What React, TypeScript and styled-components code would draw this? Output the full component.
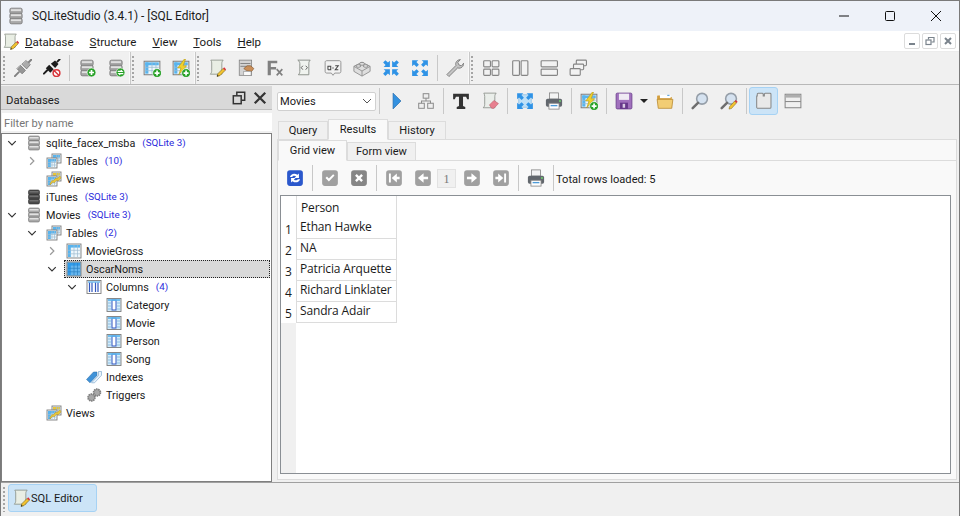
import React from 'react';
import styled, { createGlobalStyle } from 'styled-components';

const GlobalStyle = createGlobalStyle`
  html, body { margin: 0; padding: 0; background: #fff; }
  body { font-family: Roboto, 'Open Sans', 'Liberation Sans', sans-serif; font-size: 11.1px; color: #1a1a1a; }
`;

/* ---------- icons ---------- */

const Db = ({ dark }: { dark?: boolean }) => {
  const a = dark ? '#4a4a4a' : '#a9a9a9';
  const b = dark ? '#2c2c2c' : '#6f6f6f';
  return (
    <g>
      {[1, 5.5, 10].map((y) => (
        <g key={y}>
          <rect x='2.500' y={y} width='11' height='5' rx='1.500' fill={a} stroke={b} strokeWidth='.6' />
          <rect x='3.500' y={y + 1} width='9' height='1.500' fill={dark ? '#707070' : '#e2e2e2'} />
        </g>
      ))}
    </g>
  );
};

const Plus = ({ x = 12, y = 12, color = '#27a127' }: { x?: number; y?: number; color?: string }) => (
  <g>
    <circle cx={x} cy={y} r='3.900' fill={color} stroke='#fff' strokeWidth='.5' />
    <path d={`M${x - 2.2} ${y}h4.400M${x} ${y - 2.2}v4.400`} stroke='#fff' strokeWidth='1.500' />
  </g>
);

const Grid = ({ x = 1, y = 2, w = 14, h = 12, head = '#58b4ee', line = '#9dbcd1', frame = '#7d7d7d', body = '#eef7fc' }: { x?: number; y?: number; w?: number; h?: number; head?: string; line?: string; frame?: string; body?: string }) => (
  <g>
    <rect x={x} y={y} width={w} height={h} fill={body} stroke={frame} strokeWidth='.9' />
    <rect x={x + 1} y={y + 1} width={w - 2} height='2.600' fill={head} />
    <rect x={x + 1} y={y + 1} width='2.800' height={h - 2} fill={head} />
    {[0.45, 0.7].map((f) => <path key={f} d={`M${x + 1} ${y + h * f}h${w - 2}`} stroke={line} strokeWidth='.7' />)}
    {[0.5, 0.75].map((f) => <path key={f} d={`M${x + w * f} ${y + 1}v${h - 2}`} stroke={line} strokeWidth='.7' />)}
  </g>
);

const Paper = () => (
  <path d='M2.500 1h11c-1 1-1.200 2-1.200 3v9.500H2c1-1 1.300-2 1.300-3V3.500C3.300 2.500 3 1.700 2.500 1z' fill='#e9eee4' stroke='#858c82' strokeWidth='.7' />
);

const Pencil = () => (
  <g>
    <path d='M8 15.500l.8-2.500 4.600-4.600 1.800 1.800-4.600 4.600z' fill='#f2c230' stroke='#6b5a14' strokeWidth='.5' />
    <path d='M13.400 8.400l1-1 1.700 1.700-.9 1.100z' fill='#d8343a' />
    <path d='M8 15.500l.4-1.500 1.100 1.100z' fill='#222' />
  </g>
);

const Arrows = ({ color = '#2f93e6', out }: { color?: string; out?: boolean }) => (
  <g fill={color}>
    {(out
      ? ['M1 1h5.500L4.800 2.700 7 5 5 7 2.700 4.800 1 6.500z', 'M15 1v5.500l-1.700-1.700L11 7 9 5l2.200-2.300L9.500 1z', 'M1 15V9.500l1.700 1.700L5 9l2 2-2.200 2.300L6.500 15z', 'M15 15H9.500l1.700-1.700L9 11l2-2 2.300 2.200L15 9.500z']
      : ['M7 7H1.500l1.700-1.700L1 3l2-2 2.300 2.200L7 1.500z', 'M9 7V1.500l1.700 1.700L13 1l2 2-2.200 2.300L14.500 7z', 'M7 9v5.500l-1.700-1.700L3 15l-2-2 2.200-2.300L1.500 9z', 'M9 9h5.500l-1.700 1.700L15 13l-2 2-2.300-2.200L9 14.500z']
    ).map((d) => <path key={d} d={d} />)}
  </g>
);

const Wins = ({ rects }: { rects: number[][] }) => (
  <g>
    {rects.map(([x, y, w, h]) => (
      <rect key={`${x}-${y}`} x={x} y={y} width={w} height={h} rx='.8' fill='#f2f2f2' stroke='#858585' strokeWidth='1' />
    ))}
  </g>
);

const Bolt = () => <path d='M11 0L5 8h3l-2 6 7-8h-3l2-6z' fill='#f1d02c' stroke='#b09510' strokeWidth='.5' />;

const Printer = () => (
  <g>
    <rect x='4' y='.8' width='8' height='5.500' fill='#f4f4f4' stroke='#808080' strokeWidth='.7' />
    <rect x='.8' y='6' width='14.400' height='7' rx='1.500' fill='#62676d' />
    <rect x='3.500' y='10' width='9' height='5.200' fill='#fff' stroke='#808080' strokeWidth='.7' />
    <rect x='5' y='11.500' width='6' height='1.200' fill='#4d9bd8' />
    <circle cx='13.300' cy='8' r='.8' fill='#6fdc6f' />
  </g>
);

const Lens = () => (
  <g>
    <circle cx='9.800' cy='6' r='4.800' fill='#d5e2f0' stroke='#959ea8' strokeWidth='1.400' />
    <path d='M6.200 9.600L1.500 14.300' stroke='#6e6e6e' strokeWidth='2.200' strokeLinecap='round' />
  </g>
);

const Round = ({ color, children }: { color: string; children: React.ReactNode }) => (
  <g>
    <rect x='1' y='1' width='14' height='14' rx='2.500' fill={color} />
    {children}
  </g>
);

const drawings: Record<string, React.ReactNode> = {
  page: <g><Paper /><Pencil /></g>,
  plug: <g strokeLinecap='round'><path d='M.8 15.200l3.500-3.500' stroke='#808080' strokeWidth='1.700' /><path d='M2.800 8.800l4.400 4.400 3-3L5.800 5.800z' fill='#969696' stroke='#6c6c6c' strokeWidth='.6' /><path d='M7.200 4.800l4 4 3.300-3.800-3.500-3.500z' fill='#ababab' stroke='#6c6c6c' strokeWidth='.6' /><path d='M13.300 2.700l2-2' stroke='#808080' strokeWidth='1.700' /></g>,
  unplug: <g strokeLinecap='round'><path d='M.8 13l3-3' stroke='#1c1c1c' strokeWidth='1.700' /><path d='M2.500 8.200l4 4 3-3-4-4z' fill='#1c1c1c' /><path d='M7 4.200l3.800 3.800 3-3.600L10.700 1.300z' fill='#1c1c1c' /><path d='M12.800 2.300l2-2' stroke='#1c1c1c' strokeWidth='1.700' /><circle cx='12' cy='12.500' r='3' fill='#fff' stroke='#d8343a' strokeWidth='1.300' /><path d='M10 10.500l4 4' stroke='#d8343a' strokeWidth='1.300' /></g>,
  db: <Db />,
  dbDark: <Db dark />,
  dbAdd: <g><Db /><Plus /></g>,
  dbRefresh: <g><Db /><circle cx='12' cy='12' r='3.900' fill='#27a127' stroke='#fff' strokeWidth='.5' /><path d='M9.500 11h4l-1.200-1.200M14.500 13h-4l1.200 1.200' fill='none' stroke='#fff' strokeWidth='1' /></g>,
  tableAdd: <g><Grid /><Plus x={12.500} y={12.500} /></g>,
  tableBolt: <g><Grid /><Bolt /><Plus x={12.500} y={12.500} /></g>,
  hand: <g><rect x='2' y='1' width='11' height='13.500' fill='#d4d4d4' stroke='#808080' strokeWidth='.7' /><path d='M3 4h9M3 6.500h9' stroke='#7c7c7c' strokeWidth='.8' /><path d='M6 8.500l3-2.500h3l3 2.500-2 2.500-3-.4-2-.6z' fill='#c98f5a' stroke='#7c4c20' strokeWidth='.5' /><rect x='6' y='11' width='6.500' height='3.500' fill='#fafafa' stroke='#888' strokeWidth='.5' /></g>,
  fx: <g><path d='M1.500 1.500h8.500v2.300H4.300v3.200H9v2.300H4.300v5.200H1.500z' fill='#808080' /><path d='M9.500 9l5 5.500M14.500 9l-5 5.500' stroke='#808080' strokeWidth='1.500' /></g>,
  script: <g><path d='M2.500 1h11c-1 1-1.200 2-1.200 3v10H3c1-1 1.300-2 1.300-3V4c0-1-.6-2.200-1.800-3z' fill='#f0f3ef' stroke='#858a83' strokeWidth='.8' /><path d='M7 6L5.500 7.700 7 9.500M9.500 6L11 7.700 9.500 9.500' fill='none' stroke='#555' strokeWidth='.8' /></g>,
  az: <g><path d='M1 3c0-1 .5-1.500 1.500-1.500h11c1 0 1.500.5 1.500 1.500v8c0 1-.5 1.500-1.500 1.500H9.500L8 14.500l-1.500-2h-4c-1 0-1.500-.5-1.500-1.500z' fill='#f2f2f2' stroke='#8c8c8c' strokeWidth='.8' /><path d='M3.500 9.500V6.500h2.500v3H3.500M7.400 8h1.200M10 6h2.700L10 9.500h2.700' fill='none' stroke='#444' strokeWidth='.9' /></g>,
  lego: <g fill='#dedede' stroke='#8f8f8f' strokeWidth='.8'><path d='M.8 6.500L8 2.800l7.200 3.700V11L8 15.200.8 11z' /><path d='M.8 6.500l7.200 4.200 7.200-4.200M8 10.700v4.500' fill='none' /><ellipse cx='8' cy='4.300' rx='2.300' ry='1.300' /><ellipse cx='4.800' cy='6.200' rx='2.100' ry='1.200' /><ellipse cx='11.200' cy='6.200' rx='2.100' ry='1.200' /></g>,
  collapse: <Arrows />,
  expand: <Arrows out />,
  wrench: <path d='M.8 13.800L8.800 5.800C8 3.500 9.500 .8 12.800.5L10.500 3l1 2.300 2.300.8L15.800 3.600c0 3.400-2.700 5.200-5.400 4.300L2.600 15.600z' fill='#c4c4c4' stroke='#7c7c7c' strokeWidth='.8' />,
  winGrid: <Wins rects={[[1.500, 1.500, 6, 5.500], [9, 1.500, 6, 5.500], [1.500, 9, 6, 5.500], [9, 9, 6, 5.500]]} />,
  winCols: <Wins rects={[[1.500, 1.500, 6, 13], [9, 1.500, 6, 13]]} />,
  winRows: <Wins rects={[[1, 1.500, 14.500, 5.500], [1, 9, 14.500, 5.500]]} />,
  winCascade: <Wins rects={[[6.500, 1, 9, 5], [4, 4.500, 9, 5], [1, 8.500, 9, 6]]} />,
  play: <path d='M4.500 1l7 7-7 7z' fill='#3391e0' stroke='#2368a8' strokeWidth='.6' />,
  schema: <g fill='#eeeeee' stroke='#8c8c8c' strokeWidth='.9'><rect x='5.500' y='1.500' width='5' height='4' /><rect x='1.500' y='10' width='5' height='4.500' /><rect x='9.500' y='10' width='5' height='4.500' /><path d='M8 5.500V8M4 10V8h8v2' fill='none' /></g>,
  bigT: <path d='M1 1.500h14v5h-1.500L12.500 4.300H9.800v8.200l2 .9v1.600H4.200v-1.600l2-.9V4.300H3.500L2.500 6.500H1z' fill='#333' />,
  eraser: <g><path d='M2.500 1h11c-1 1-1.200 2-1.200 3v10H2c1-1 1.300-2 1.300-3V4c0-1-.3-2.200-.8-3z' fill='#eaeeea' stroke='#858a83' strokeWidth='.7' /><path d='M7.500 11.500l4-4 4 2.800-4 4.200h-2z' fill='#e77f8f' stroke='#b85a66' strokeWidth='.5' /></g>,
  expandDense: <g><rect x='2.500' y='2.500' width='11' height='11' fill='#bfe0f7' stroke='#7fb8e2' strokeWidth='.6' /><Arrows out /></g>,
  printer: <Printer />,
  save: <g><rect x='1' y='1' width='14' height='14' rx='1' fill='#a070bd' stroke='#6f4390' strokeWidth='.8' /><rect x='3.500' y='1.500' width='9' height='5.500' fill='#efeaf3' /><rect x='4.500' y='9.500' width='7' height='5.500' fill='#66378a' /><rect x='6.800' y='10.500' width='2.200' height='3.500' fill='#d9cbe4' /></g>,
  folder: <g><path d='M1 4c0-.7.3-1 1-1h4l1.500 1.500H14v3H1z' fill='#d39e3d' /><path d='M3.500 2.500H13v3H3.500z' fill='#fff' /><path d='M10 2.500h2v1h-2z' fill='#5da5dc' /><path d='M1 6.500h14l-1 8H2z' fill='#f2cd74' stroke='#b8892f' strokeWidth='.7' /></g>,
  search: <Lens />,
  searchPen: <g><Lens /><path d='M8 15.200l.5-2.200 4.500-5 1.700 1.700-4.500 5z' fill='#f2c230' stroke='#6b5a14' strokeWidth='.4' /><path d='M13 8l1-1 1.700 1.700-1 1z' fill='#d8343a' /></g>,
  layoutTabs: <path d='M1.500 3.500h.5V2c0-.5.3-.8.8-.8h3.700c.5 0 .8.300.8.800v1.500h1V2c0-.5.3-.8.800-.8h4.300c.5 0 .8.300.8.800v11.500c0 .5-.5 1-1 1H2.500c-.5 0-1-.5-1-1z' fill='#e9e9e9' stroke='#858585' strokeWidth='.9' />,
  layoutRows: <g><rect x='1' y='2' width='14' height='12' fill='#f0f0f0' stroke='#858585' strokeWidth='.9' /><path d='M1 8.500h14' stroke='#858585' strokeWidth='.9' /><rect x='1.500' y='2.500' width='13' height='2.500' fill='#aeaeae' /></g>,
  refresh: <Round color='#2b58cc'><path d='M3.500 7c.6-2.500 4-4 6.700-1.800l1.300-1.200V8H7.500l1.500-1.500C7.500 5.500 6 6 5.500 7zM12.500 9c-.6 2.500-4 4-6.700 1.800L4.500 12V8h4L7 9.500c1.500 1 3 .5 3.500-.5z' fill='#fff' /></Round>,
  check: <Round color='#a0a0a0'><path d='M4 8l1.300-1.300L7 8.400l3.800-3.800L12 5.800 7 11z' fill='#fff' /></Round>,
  cross: <Round color='#868686'><path d='M4.500 6L6 4.500l2 2 2-2L11.500 6l-2 2 2 2-1.500 1.500-2-2-2 2L4.500 10l2-2z' fill='#fff' /></Round>,
  first: <Round color='#a0a0a0'><path d='M3.500 4h1.700v8H3.500zM6 8l4.500-4v2.800h2.500v2.400h-2.500V12z' fill='#fff' /></Round>,
  prev: <Round color='#a0a0a0'><path d='M3.500 8L8.500 3.800V6.800H12.500v2.400H8.500v3z' fill='#fff' /></Round>,
  next: <Round color='#a0a0a0'><path d='M12.500 8L7.500 3.800V6.800H3.500v2.400h4v3z' fill='#fff' /></Round>,
  last: <Round color='#a0a0a0'><path d='M12.500 4h-1.700v8h1.700zM10 8L5.500 4v2.800H3v2.400h2.500V12z' fill='#fff' /></Round>,
  tables: <g><Grid x={6} y={1} w={9} h={9} /><Grid x={1} y={5} w={10} h={10} /></g>,
  views: <g><Grid x={6} y={1} w={9} h={9} head='#e9c638' /><Grid x={1} y={5} w={10} h={10} /><path d='M4 14l3-3 1 1 3-3 1 1 3-3-1-2-3 2.500-1-.5-3 3-1-.5-2 3z' fill='#e9c638' stroke='#a9891a' strokeWidth='.4' /></g>,
  table: <Grid y={1} h={14} w={14} />,
  tableSel: <Grid y={1} h={14} w={14} head='#2f9bea' body='#66b6ee' line='#2a7fc2' />,
  columns: <g><rect x='1' y='1.500' width='14' height='13' fill='#fff' stroke='#7d7d7d' strokeWidth='.9' /><path d='M3.500 3v10M6 3v10M9.500 3v10M12 3v10' stroke='#3157bf' strokeWidth='1.200' /><path d='M2 3h12' stroke='#7cc0ee' strokeWidth='1.600' /></g>,
  column: <g><rect x='1' y='1.500' width='14' height='13' fill='#d3ebfa' stroke='#7d7d7d' strokeWidth='.9' /><rect x='6' y='3' width='4' height='10' fill='#fff' stroke='#3157bf' strokeWidth='1' /><path d='M2 3h12' stroke='#58b4ee' strokeWidth='1.600' /><path d='M2 6h3M2 9h3M2 12h3M11 6h3M11 9h3M11 12h3' stroke='#7cb4dc' strokeWidth='.8' /></g>,
  indexes: <g><path d='M.5 10.500L7.500 3H11v3.500L4 13.800z' fill='#3f92d8' stroke='#2a6aa3' strokeWidth='.5' /><path d='M5.500 13.800l7-7.300V2.500h3v3.800l-7 7.500z' fill='#eaf3fb' stroke='#6f9fc8' strokeWidth='.6' /></g>,
  triggers: <g fill='#a8a8a8' stroke='#7e7e7e'><circle cx='5.500' cy='10.500' r='3.400' strokeDasharray='1.400 .7' strokeWidth='1.800' /><circle cx='11' cy='5.500' r='3.400' strokeDasharray='1.400 .7' strokeWidth='1.800' /></g>,
  chevDown: <path d='M3 5.500l5 5 5-5' fill='none' stroke='#333' strokeWidth='1.600' />,
  chevRight: <path d='M5.500 3l5 5-5 5' fill='none' stroke='#999' strokeWidth='1.600' />,
  undock: <g fill='none' stroke='#333' strokeWidth='1.700'><rect x='1.500' y='5.500' width='9' height='9' /><path d='M5.500 5V1.500h9v9H11' /></g>,
  closeBold: <path d='M2 2l12 12M14 2L2 14' stroke='#333' strokeWidth='2.600' />,
};

const IconSvg = styled.svg<{ $size: number }>`
  display: block;
  width: ${(p) => p.$size}px;
  height: ${(p) => p.$size}px;
  flex: none;
`;

const Icon = ({ name, size = 18 }: { name: string; size?: number }) => (
  <IconSvg $size={size} viewBox='0 0 16 16'>{drawings[name]}</IconSvg>
);

/* ---------- window ---------- */

const Window = styled.div`
  width: 960px;
  height: 516px;
  box-sizing: border-box;
  border: 1px solid #7a7a7a;
  border-bottom: none;
  display: flex;
  flex-direction: column;
  overflow: hidden;
  background: #f0f0f0;
`;

const TitleBar = styled.div`
  height: 30px;
  flex: none;
  display: flex;
  align-items: center;
  background: #eef2f9;
  padding-left: 6px;
  gap: 7px;
`;

const TitleText = styled.div`
  flex: 1;
  font-size: 11.9px;
  color: #1a1a1a;
`;

const CaptionButtons = styled.div`
  display: flex;
`;

const CaptionButton = styled.div`
  width: 46px;
  height: 30px;
  display: flex;
  align-items: center;
  justify-content: center;
`;

const MenuBar = styled.div`
  height: 20px;
  flex: none;
  background: #fff;
  display: flex;
  align-items: center;
  padding-left: 1px;
  border-bottom: 1px solid #ececec;
`;

const MenuItems = styled.div`
  display: flex;
  flex: 1;
  gap: 16px;
  margin-left: 6px;
  padding-top: 2px;
  font-size: 11.5px;
`;

const Mnemonic = styled.span`
  text-decoration: underline;
`;

const MdiButtons = styled.div`
  display: flex;
  gap: 2px;
  margin-right: 3px;
`;

const MdiButton = styled.div`
  width: 16px;
  height: 16px;
  box-sizing: border-box;
  border: 1px solid #dcdcdc;
  border-radius: 2px;
  background: #fff;
  display: flex;
  align-items: center;
  justify-content: center;
`;

const MainToolbar = styled.div`
  height: 32px;
  flex: none;
  display: flex;
  align-items: stretch;
  border-bottom: 1px solid #b8b8b8;
`;

const ToolGroup = styled.div<{ $first?: boolean }>`
  display: flex;
  align-items: center;
  border-left: ${(p) => (p.$first ? 'none' : '1px solid #f9f9f9')};
  box-shadow: ${(p) => (p.$first ? 'none' : 'inset 1px 0 0 #c8c8c8')};
  margin-left: ${(p) => (p.$first ? '0' : '-1px')};
`;

const Grip = styled.div`
  width: 2px;
  height: 26px;
  margin: 0 3px 0 2px;
  background-image: radial-gradient(circle, #a5a5a5 0.8px, transparent 1px);
  background-size: 2px 4px;
`;

const ToolButton = styled.div<{ $active?: boolean; $narrow?: boolean }>`
  width: ${(p) => (p.$narrow ? '12px' : '29px')};
  height: 28px;
  box-sizing: border-box;
  flex: none;
  display: flex;
  align-items: center;
  justify-content: center;
  border-radius: 3px;
  background: ${(p) => (p.$active ? '#cce4f7' : 'transparent')};
  border: 1px solid ${(p) => (p.$active ? '#a6d2f4' : 'transparent')};
`;

const ToolSep = styled.div`
  width: 1px;
  height: 26px;
  flex: none;
  margin: 0 2.5px;
  background: #c8c8c8;
`;

const DropArrow = styled.div`
  width: 0;
  height: 0;
  border-left: 4px solid transparent;
  border-right: 4px solid transparent;
  border-top: 4px solid #222;
`;

const Body = styled.div`
  flex: 1;
  min-height: 0;
  display: flex;
`;

/* ---------- databases dock ---------- */

const Dock = styled.div`
  width: 271px;
  flex: none;
  display: flex;
  flex-direction: column;
  padding-top: 1px;
`;

const DockHeader = styled.div`
  height: 24px;
  flex: none;
  box-sizing: border-box;
  background: #d9d9d9;
  display: flex;
  align-items: center;
  padding: 0 2px 0 5px;
  border-bottom: 1px solid #bdbdbd;
`;

const DockTitle = styled.div`
  flex: 1;
  padding-top: 5px;
  font-size: 11.3px;
`;

const DockAction = styled.div`
  width: 21px;
  display: flex;
  justify-content: center;
`;

const FilterInput = styled.div`
  height: 18px;
  margin: 3px 0 2px 1px;
  background: #fff;
  color: #767676;
  line-height: 22px;
  padding-left: 2px;
`;

const TreeBox = styled.div`
  flex: 1;
  box-sizing: border-box;
  background: #fff;
  border: 1px solid #7f7f7f;
`;

const TreeRow = styled.div<{ $level: number }>`
  height: 18px;
  display: flex;
  align-items: center;
  padding-left: ${(p) => p.$level * 20}px;
`;

const Arrow = styled.div`
  width: 20px;
  margin-right: 4px;
  flex: none;
  display: flex;
  justify-content: center;
`;

const TreeItem = styled.div<{ $selected?: boolean }>`
  flex: ${(p) => (p.$selected ? 1 : 'none')};
  height: 18px;
  box-sizing: border-box;
  display: flex;
  align-items: center;
  gap: 4px;
  font-size: 10.8px;
  background: ${(p) => (p.$selected ? '#d9d9d9' : 'transparent')};
  outline: ${(p) => (p.$selected ? '1px dotted #222' : 'none')};
  outline-offset: -1px;
  margin-left: ${(p) => (p.$selected ? '-2px' : '0')};
  padding-left: ${(p) => (p.$selected ? '2px' : '0')};
  margin-right: ${(p) => (p.$selected ? '1px' : '0')};
`;

const TreeLabel = styled.span`
  white-space: nowrap;
  padding-top: 1px;
`;

const TreeTag = styled.span`
  color: #2b2bdc;
  font-size: 9.8px;
  margin-left: 3px;
  position: relative;
  top: -1px;
  white-space: nowrap;
`;

/* ---------- editor ---------- */

const Editor = styled.div`
  flex: 1;
  min-width: 0;
  display: flex;
  flex-direction: column;
  padding: 0 2px 0 5px;
`;

const EditorToolbar = styled.div`
  height: 30px;
  flex: none;
  box-sizing: border-box;
  padding-top: 2px;
  display: flex;
  align-items: center;
`;

const Combo = styled.div`
  width: 99px;
  height: 19px;
  box-sizing: border-box;
  flex: none;
  background: #fff;
  border: 1px solid #d0d0d0;
  border-radius: 2px;
  display: flex;
  align-items: center;
  justify-content: space-between;
  padding: 0 3px 0 2px;
`;

const TabBar = styled.div<{ $height: number; $inset: number }>`
  height: ${(p) => p.$height}px;
  flex: none;
  display: flex;
  align-items: flex-end;
  padding-left: ${(p) => p.$inset}px;
  position: relative;
  z-index: 1;
`;

const Tab = styled.div<{ $active?: boolean; $width: number }>`
  width: ${(p) => p.$width}px;
  height: ${(p) => (p.$active ? '21px' : '18px')};
  box-sizing: border-box;
  text-align: center;
  line-height: ${(p) => (p.$active ? '20px' : '18px')};
  background: ${(p) => (p.$active ? '#f9f9f9' : '#f0f0f0')};
  border: 1px solid #dcdcdc;
  border-bottom: ${(p) => (p.$active ? '1px solid #f9f9f9' : 'none')};
  margin-bottom: ${(p) => (p.$active ? '-1px' : '0')};
`;

const Pane = styled.div`
  flex: 1;
  min-height: 0;
  box-sizing: border-box;
  display: flex;
  flex-direction: column;
  background: #f9f9f9;
  border: 1px solid #dcdcdc;
  margin-bottom: 2px;
`;

const SubPane = styled.div`
  flex: 1;
  min-height: 0;
  box-sizing: border-box;
  display: flex;
  flex-direction: column;
  border-top: 1px solid #dcdcdc;
  padding: 0 5px 5px 2px;
`;

const GridToolbar = styled.div`
  height: 34px;
  flex: none;
  display: flex;
  align-items: center;
`;

const PageField = styled.div`
  width: 19px;
  height: 19px;
  box-sizing: border-box;
  flex: none;
  margin-right: 1px;
  background: #f0f0f0;
  border: 1px solid #e2e2e2;
  color: #777;
  text-align: center;
  line-height: 18px;
  font-family: 'Liberation Serif', serif;
  font-size: 12px;
`;

const RowsLoaded = styled.div`
  padding-top: 2px;
  white-space: nowrap;
`;

const DataBox = styled.div`
  flex: 1;
  min-height: 0;
  background: #fff;
  border: 1px solid #8a8f94;
  display: flex;
`;

const RowHeaderColumn = styled.div`
  width: 15px;
  flex: none;
  display: flex;
  flex-direction: column;
  background: #f0f0f0;
`;

const CornerCell = styled.div`
  height: 22px;
  flex: none;
  background: #fff;
`;

const RowNumber = styled.div`
  height: 21px;
  flex: none;
  background: #fff;
  box-sizing: border-box;
  padding: 4px 0 0 4px;
  font-family: 'Open Sans', sans-serif;
  font-size: 12px;
  line-height: 16px;
`;

const DataColumn = styled.div`
  width: 99px;
  flex: none;
  align-self: flex-start;
  display: flex;
  flex-direction: column;
  border-left: 1px solid #dcdcdc;
  border-right: 1px solid #dcdcdc;
  font-family: 'Open Sans', sans-serif;
  font-size: 12px;
  letter-spacing: -0.15px;
`;

const HeaderCell = styled.div`
  height: 22px;
  flex: none;
  padding: 4px 0 0 4px;
  box-sizing: border-box;
  line-height: 16px;
`;

const DataCell = styled.div`
  height: 21px;
  flex: none;
  box-sizing: border-box;
  padding: 0 0 0 3px;
  line-height: 18px;
  border-bottom: 1px solid #dcdcdc;
  white-space: nowrap;
`;

/* ---------- bottom bar ---------- */

const TaskBar = styled.div`
  height: 34px;
  flex: none;
  box-sizing: border-box;
  border-top: 1px solid #a0a0a0;
  display: flex;
  align-items: flex-start;
  padding-top: 1px;
`;

const TaskGrip = styled(Grip)`
  margin: 2px 3px 0 2px;
`;

const TaskButton = styled.div`
  width: 89px;
  height: 28px;
  box-sizing: border-box;
  background: #cce4f7;
  border: 1px solid #a6d2f4;
  border-radius: 3px;
  display: flex;
  align-items: center;
  padding-left: 3px;
  gap: 1px;
`;

/* ---------- data ---------- */

type Node = { level: number; icon: string; label: string; tag?: string; open?: boolean; closed?: boolean; selected?: boolean };

const tree: Node[] = [
  { level: 0, icon: 'db', label: 'sqlite_facex_msba', tag: '(SQLite 3)', open: true },
  { level: 1, icon: 'tables', label: 'Tables', tag: '(10)', closed: true },
  { level: 1, icon: 'views', label: 'Views' },
  { level: 0, icon: 'dbDark', label: 'iTunes', tag: '(SQLite 3)' },
  { level: 0, icon: 'db', label: 'Movies', tag: '(SQLite 3)', open: true },
  { level: 1, icon: 'tables', label: 'Tables', tag: '(2)', open: true },
  { level: 2, icon: 'table', label: 'MovieGross', closed: true },
  { level: 2, icon: 'tableSel', label: 'OscarNoms', open: true, selected: true },
  { level: 3, icon: 'columns', label: 'Columns', tag: '(4)', open: true },
  { level: 4, icon: 'column', label: 'Category' },
  { level: 4, icon: 'column', label: 'Movie' },
  { level: 4, icon: 'column', label: 'Person' },
  { level: 4, icon: 'column', label: 'Song' },
  { level: 3, icon: 'indexes', label: 'Indexes' },
  { level: 3, icon: 'triggers', label: 'Triggers' },
  { level: 1, icon: 'views', label: 'Views' },
];

const menus = [['D', 'atabase'], ['S', 'tructure'], ['V', 'iew'], ['T', 'ools'], ['H', 'elp']];
const people = ['Ethan Hawke', 'NA', 'Patricia Arquette', 'Richard Linklater', 'Sandra Adair'];

const Buttons = ({ names }: { names: string[] }) => (
  <>
    {names.map((n) => <ToolButton key={n}><Icon name={n} /></ToolButton>)}
  </>
);

export default function App(): React.ReactElement {
  return (
    <Window>
      <GlobalStyle />
      <TitleBar>
        <Icon name='db' size={18} />
        <TitleText>SQLiteStudio (3.4.1) - [SQL Editor]</TitleText>
        <CaptionButtons>
          <CaptionButton>
            <svg width='12' height='12' viewBox='0 0 12 12'><path d='M1 6h10' stroke='#111' strokeWidth='1' /></svg>
          </CaptionButton>
          <CaptionButton>
            <svg width='12' height='12' viewBox='0 0 12 12'><rect x='1.500' y='1.500' width='9' height='9' rx='1' fill='none' stroke='#111' /></svg>
          </CaptionButton>
          <CaptionButton>
            <svg width='12' height='12' viewBox='0 0 12 12'><path d='M1 1l10 10M11 1L1 11' stroke='#111' strokeWidth='1' /></svg>
          </CaptionButton>
        </CaptionButtons>
      </TitleBar>

      <MenuBar>
        <Icon name='page' size={17} />
        <MenuItems>
          {menus.map(([k, rest]) => <span key={k}><Mnemonic>{k}</Mnemonic>{rest}</span>)}
        </MenuItems>
        <MdiButtons>
          <MdiButton><svg width='10' height='10' viewBox='0 0 10 10'><path d='M2 8h6' stroke='#7a838c' strokeWidth='2' /></svg></MdiButton>
          <MdiButton><svg width='10' height='10' viewBox='0 0 10 10' fill='none' stroke='#7a838c' strokeWidth='1.200'><rect x='1' y='4' width='5' height='4.500' /><path d='M3.500 3.500V1.500H9V6H6.500' /></svg></MdiButton>
          <MdiButton><svg width='10' height='10' viewBox='0 0 10 10'><path d='M2 2l6 6M8 2L2 8' stroke='#7a838c' strokeWidth='2' /></svg></MdiButton>
        </MdiButtons>
      </MenuBar>

      <MainToolbar>
        <ToolGroup $first>
          <Grip />
          <Buttons names={['plug', 'unplug']} />
          <ToolSep />
          <Buttons names={['dbAdd', 'dbRefresh']} />
        </ToolGroup>
        <ToolGroup>
          <Grip />
          <Buttons names={['tableAdd', 'tableBolt']} />
        </ToolGroup>
        <ToolGroup>
          <Grip />
          <Buttons names={['page', 'hand', 'fx', 'script', 'az', 'lego', 'collapse', 'expand']} />
          <ToolSep />
          <Buttons names={['wrench']} />
        </ToolGroup>
        <ToolGroup>
          <Grip />
          <Buttons names={['winGrid', 'winCols', 'winRows', 'winCascade']} />
        </ToolGroup>
      </MainToolbar>

      <Body>
        <Dock>
          <DockHeader>
            <DockTitle>Databases</DockTitle>
            <DockAction><Icon name='undock' size={14} /></DockAction>
            <DockAction><Icon name='closeBold' size={14} /></DockAction>
          </DockHeader>
          <FilterInput>Filter by name</FilterInput>
          <TreeBox>
            {tree.map((n, i) => (
              <TreeRow key={`${n.label}-${i}`} $level={n.level}>
                <Arrow>
                  {n.open && <Icon name='chevDown' size={12} />}
                  {n.closed && <Icon name='chevRight' size={12} />}
                </Arrow>
                <TreeItem $selected={n.selected}>
                  <Icon name={n.icon} size={16} />
                  <TreeLabel>{n.label}</TreeLabel>
                  {n.tag && <TreeTag>{n.tag}</TreeTag>}
                </TreeItem>
              </TreeRow>
            ))}
          </TreeBox>
        </Dock>

        <Editor>
          <EditorToolbar>
            <Combo>
              Movies
              <svg width='10' height='6' viewBox='0 0 10 6'><path d='M1 1l4 4 4-4' fill='none' stroke='#555' /></svg>
            </Combo>
            <ToolSep />
            <Buttons names={['play', 'schema']} />
            <ToolSep />
            <Buttons names={['bigT', 'eraser']} />
            <ToolSep />
            <Buttons names={['expandDense', 'printer']} />
            <ToolSep />
            <Buttons names={['tableBolt']} />
            <ToolSep />
            <Buttons names={['save']} />
            <ToolButton $narrow><DropArrow /></ToolButton>
            <Buttons names={['folder']} />
            <ToolSep />
            <Buttons names={['search', 'searchPen']} />
            <ToolSep />
            <ToolButton $active><Icon name='layoutTabs' /></ToolButton>
            <Buttons names={['layoutRows']} />
          </EditorToolbar>

          <TabBar $height={24} $inset={1}>
            <Tab $width={50}>Query</Tab>
            <Tab $active $width={60}>Results</Tab>
            <Tab $width={58}>History</Tab>
          </TabBar>
          <Pane>
            <TabBar $height={20} $inset={0}>
              <Tab $active $width={69}>Grid view</Tab>
              <Tab $width={69}>Form view</Tab>
            </TabBar>
            <SubPane>
              <GridToolbar>
                <Buttons names={['refresh']} />
                <ToolSep />
                <Buttons names={['check', 'cross']} />
                <ToolSep />
                <Buttons names={['first', 'prev']} />
                <PageField>1</PageField>
                <Buttons names={['next', 'last']} />
                <ToolSep />
                <Buttons names={['printer']} />
                <ToolSep />
                <RowsLoaded>Total rows loaded: 5</RowsLoaded>
              </GridToolbar>
              <DataBox>
                <RowHeaderColumn>
                  <CornerCell />
                  {people.map((_, i) => <RowNumber key={i}>{i + 1}</RowNumber>)}
                </RowHeaderColumn>
                <DataColumn>
                  <HeaderCell>Person</HeaderCell>
                  {people.map((p) => <DataCell key={p}>{p}</DataCell>)}
                </DataColumn>
              </DataBox>
            </SubPane>
          </Pane>
        </Editor>
      </Body>

      <TaskBar>
        <TaskGrip />
        <TaskButton>
          <Icon name='page' size={18} />
          SQL Editor
        </TaskButton>
      </TaskBar>
    </Window>
  );
}
